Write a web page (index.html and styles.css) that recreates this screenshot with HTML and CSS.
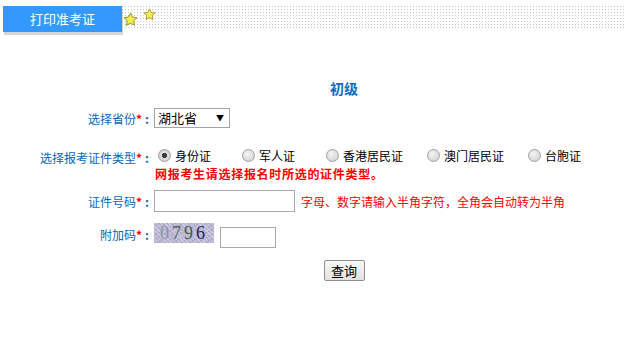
FILE: index.html
```html
<!DOCTYPE html>
<html lang="zh-CN">
<head>
    <meta charset="UTF-8">
    <meta name="viewport" content="width=device-width, initial-scale=1.0">
    <title>打印准考证</title>
    <link rel="stylesheet" href="styles.css">
</head>
<body>

    <div class="topbar">
        <div class="tab">打印准考证</div>
        <div class="dots">
            <svg class="dot-grid" width="100%" height="24">
                <defs>
                    <pattern id="dot" width="3" height="3" patternUnits="userSpaceOnUse">
                        <rect x="0" y="0" width="1" height="1" fill="#c6c6c6"/>
                    </pattern>
                </defs>
                <rect width="100%" height="24" fill="url(#dot)"/>
            </svg>
            <svg class="star star-big" viewBox="0 0 24 24" width="15" height="15">
                <path d="M12 1.5l3.2 6.6 7.2 1-5.2 5 1.3 7.2L12 17.9l-6.5 3.4 1.3-7.2-5.2-5 7.2-1z" fill="#f7ec4c" stroke="#9a9438" stroke-width="1.6" stroke-linejoin="round"/>
            </svg>
            <svg class="star star-small" viewBox="0 0 24 24" width="13" height="13">
                <path d="M12 1.5l3.2 6.6 7.2 1-5.2 5 1.3 7.2L12 17.9l-6.5 3.4 1.3-7.2-5.2-5 7.2-1z" fill="#f7ec4c" stroke="#9a9438" stroke-width="1.6" stroke-linejoin="round"/>
            </svg>
        </div>
    </div>

    <form class="print-form" onsubmit="return false;">
        <div class="title">初级</div>

        <div class="row row-province">
            <label class="label" for="province">选择省份<em>*</em><b>:</b></label>
            <div class="field">
                <span class="select">
                    <select id="province">
                        <option>湖北省</option>
                    </select>
                    <span class="arrow">▼</span>
                </span>
            </div>
        </div>

        <div class="row row-type">
            <span class="label">选择报考证件类型<em>*</em><b>:</b></span>
            <div class="field">
                <div class="options">
                    <label class="opt"><input type="radio" name="idtype" checked> 身份证</label>
                    <label class="opt"><input type="radio" name="idtype"> 军人证</label>
                    <label class="opt long"><input type="radio" name="idtype"> 香港居民证</label>
                    <label class="opt long"><input type="radio" name="idtype"> 澳门居民证</label>
                    <label class="opt"><input type="radio" name="idtype"> 台胞证</label>
                </div>
                <div class="warn">网报考生请选择报名时所选的证件类型。</div>
            </div>
        </div>

        <div class="row row-id">
            <label class="label" for="idno">证件号码<em>*</em><b>:</b></label>
            <div class="field inline">
                <input type="text" id="idno" class="text-input id-input">
                <span class="hint">字母、数字请输入半角字符，全角会自动转为半角</span>
            </div>
        </div>

        <div class="row row-code">
            <label class="label" for="code">附加码<em>*</em><b>:</b></label>
            <div class="field inline">
                <span class="captcha"><span class="d1">0</span><span class="d2">7</span><span class="d3">9</span><span class="d4">6</span></span>
                <input type="text" id="code" class="text-input code-input">
            </div>
        </div>

        <div class="actions">
            <button type="submit">查询</button>
        </div>
    </form>

</body>
</html>
```

FILE: styles.css
```css
body {
    margin: 0;
    font-family: "Noto Sans CJK SC", "DejaVu Sans", sans-serif;
    font-size: 12px;
    color: #000;
    background: #fff;
}

.topbar {
    display: flex;
    height: 36px;
}

.tab {
    margin: 6px 0 0 3px;
    width: 119px;
    height: 26px;
    line-height: 26px;
    background-color: #3399ff;
    color: #fff;
    font-size: 13px;
    text-align: center;
    box-shadow: 1px 3px 0 #d6d6d6;
}

.dots {
    flex: 1;
    position: relative;
    margin-top: 6px;
    height: 24px;
}

.dot-grid {
    display: block;
}

.star {
    position: absolute;
}

.star-big {
    left: 1px;
    top: 6px;
}

.star-small {
    left: 21px;
    top: 2px;
}

.print-form {
    margin: 0;
}

.title {
    margin-top: 42px;
    padding-left: 63px;
    line-height: 20px;
    text-align: center;
    color: #0a6ebd;
    font-size: 14px;
    font-weight: bold;
}

.row {
    display: flex;
}

.label {
    width: 151px;
    flex: none;
    text-align: right;
    color: #0867bb;
}

.label em {
    font-style: normal;
    color: #ff0000;
    font-weight: bold;
}

.label b {
    padding: 0 2px 0 3px;
}

.field {
    margin-left: 3px;
}

.field.inline {
    display: flex;
    align-items: center;
}

.row-province {
    margin-top: 8px;
    height: 24px;
    align-items: center;
}

.select {
    display: inline-flex;
    align-items: center;
    width: 74px;
    height: 18px;
    border: 1px solid #a5a5a5;
    background: #fff;
}

.select select {
    appearance: none;
    border: none;
    outline: none;
    background: transparent;
    font-family: inherit;
    font-size: 13px;
    padding: 0 0 0 3px;
    width: 60px;
    height: 18px;
    line-height: 18px;
}

.arrow {
    font-size: 8px;
    line-height: 18px;
    margin-left: 1px;
}

.row-type {
    margin-top: 15px;
}

.row-type .label {
    line-height: 20px;
    padding-top: 3px;
}

.options {
    display: flex;
    height: 20px;
    align-items: center;
    margin-left: 4px;
}

.opt {
    display: inline-flex;
    align-items: center;
    width: 84px;
    font-size: 12px;
}

.opt.long {
    width: 101px;
}

.opt input {
    appearance: none;
    margin: 0 4px 0 0;
    width: 13px;
    height: 13px;
    border-radius: 50%;
    border: 1px solid #a0a0a0;
    box-sizing: border-box;
    background: radial-gradient(circle at 40% 35%, #f4f4f4, #cdcdcd);
}

.opt input:checked {
    background: radial-gradient(circle, #3c3c3c 0 2.3px, #e0e0e0 2.9px, #c8c8c8);
}

.warn {
    margin-left: 1px;
    line-height: 18px;
    color: #ff0000;
    font-weight: bold;
    letter-spacing: 0.7px;
}

.row-id {
    margin-top: 5px;
    height: 26px;
    align-items: center;
}

.text-input {
    box-sizing: border-box;
    border: 1px solid #a9a9a9;
    padding: 0 3px;
    font-size: 12px;
}

.id-input {
    width: 141px;
    height: 22px;
}

.hint {
    margin-left: 6px;
    color: #ff0000;
}

.row-code {
    margin-top: 8px;
    height: 27px;
    align-items: flex-start;
}

.row-code .label {
    line-height: 20px;
    padding-top: 3px;
}

.row-code .field.inline {
    align-items: flex-start;
}

.captcha {
    display: inline-flex;
    align-items: center;
    justify-content: center;
    margin-top: 1px;
    width: 60px;
    height: 20px;
    background-color: #bab6d4;
    background-image: repeating-linear-gradient(45deg, rgba(255, 255, 255, 0.3) 0 1px, transparent 1px 3px),
        repeating-linear-gradient(-30deg, rgba(120, 110, 160, 0.25) 0 1px, transparent 1px 4px);
    font-family: "Liberation Serif", serif;
    font-size: 18px;
    letter-spacing: 3px;
    line-height: 20px;
}

.captcha .d1 { color: #8596a6; }
.captcha .d2 { color: #56635f; }
.captcha .d3 { color: #3f6446; }
.captcha .d4 { color: #262659; }

.code-input {
    margin-left: 6px;
    margin-top: 5px;
    width: 56px;
    height: 21px;
}

.actions {
    margin-top: 11px;
    padding-left: 63px;
    text-align: center;
}

button {
    width: 41px;
    height: 21px;
    padding: 0;
    font-family: inherit;
    font-size: 13px;
    line-height: 19px;
    border: 1px solid #8f8f8f;
    border-radius: 2px;
    background: linear-gradient(#f8f8f8, #e2e2e2);
    cursor: pointer;
}
```
